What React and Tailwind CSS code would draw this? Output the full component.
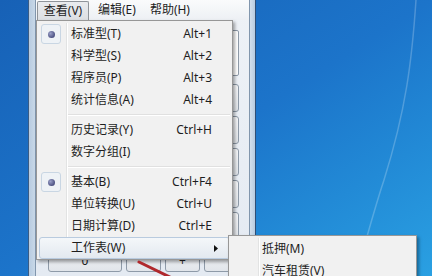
import React from 'react'

const menuItems = [
  { label: '标准型(T)', shortcut: 'Alt+1', checked: true },
  { label: '科学型(S)', shortcut: 'Alt+2' },
  { label: '程序员(P)', shortcut: 'Alt+3' },
  { label: '统计信息(A)', shortcut: 'Alt+4' },
  { separator: true },
  { label: '历史记录(Y)', shortcut: 'Ctrl+H' },
  { label: '数字分组(I)' },
  { separator: true },
  { label: '基本(B)', shortcut: 'Ctrl+F4', checked: true },
  { label: '单位转换(U)', shortcut: 'Ctrl+U' },
  { label: '日期计算(D)', shortcut: 'Ctrl+E' },
  { label: '工作表(W)', submenu: true, hover: true },
]

const subItems = ['抵押(M)', '汽车租赁(V)']

// keys hidden under the menu carry no label
const hiddenRows = 5

const CalcKey = ({ label, wide }) => (
  <div
    className={`${wide ? 'w-[74px]' : 'w-[35px]'} h-[28px] shrink-0 rounded-[3px] border border-[#8e9aa8] bg-linear-to-b from-[#f7f8fa] to-[#e1e5ea] flex items-center justify-center pt-[5px] text-[12px] leading-[14px] text-[#222]`}
  >
    {label}
  </div>
)

const RadioMark = () => (
  <div className="ml-[1px] w-[20px] h-[20px] rounded-[3px] border border-[#c9d6e3] bg-[#eef2f6] flex items-center justify-center">
    <div className="w-[7px] h-[7px] rounded-full bg-radial-[at_35%_35%] from-[#9aa0c8] to-[#2d3166]" />
  </div>
)

const MenuRow = ({ item }) => {
  if (item.separator) {
    return (
      <div className="h-[8px] flex flex-col justify-center pl-[29px]">
        <div className="h-[1px] bg-[#e0e0e0]" />
        <div className="h-[1px] bg-white" />
      </div>
    )
  }
  return (
    <div
      className={`h-[22px] flex items-center rounded-[3px] border ${
        item.hover ? 'border-[#b9cbdf] bg-linear-to-b from-[#f4f7fa] to-[#e3e9f0]' : 'border-transparent'
      }`}
    >
      <div className="w-[26px] h-full flex items-center">{item.checked && <RadioMark />}</div>
      <span className="ml-[5px] flex-1">{item.label}</span>
      {item.shortcut && <span className="mr-[17px]">{item.shortcut}</span>}
      {item.submenu && (
        <svg width="4" height="7" viewBox="0 0 4 7" className="mr-[11px]">
          <path d="M0 0 L4 3.5 L0 7 Z" fill="#111" />
        </svg>
      )}
    </div>
  )
}

const App = () => {
  return (
    <div className="relative w-[432px] h-[276px] overflow-hidden flex bg-linear-to-br from-[#1761b6] via-[#1c74ca] to-[#2aa0e2] text-[12px] text-[#1e1e1e] font-['Noto_Sans','Noto_Sans_CJK_SC',sans-serif]">
      {/* desktop left */}
      <div className="w-[28px] shrink-0" />

      {/* window */}
      <div className="w-[228px] shrink-0 flex">
        <div className="w-[8px] flex">
          <div className="w-[1px] bg-[#3a5c85]" />
          <div className="w-[6px] bg-linear-to-r from-[#b7cbe0] to-[#c8d8e8]" />
          <div className="w-[1px] bg-[#8196ad]" />
        </div>

        <div className="flex-1 flex flex-col bg-linear-to-b from-[#eef2f7] to-[#e4eaf2]">
          {/* menu bar */}
          <div className="h-[20px] flex items-center bg-linear-to-b from-[#fafbfc] to-[#edf0f4]">
            <div className="ml-[1px] h-[19px] w-[52px] mt-[1px] flex items-center justify-center rounded-t-[2px] border border-b-0 border-[#8f949a] bg-linear-to-b from-[#e9ebee] to-[#dcdfe3]">
              查看(V)
            </div>
            <div className="ml-[9px]">编辑(E)</div>
            <div className="ml-[14px]">帮助(H)</div>
          </div>

          {/* calculator body */}
          <div className="flex-1 pl-[12px] pt-[10px] flex flex-col">
            <div className="h-[46px] w-[191px] shrink-0 rounded-[2px] border border-[#8e9aa8] bg-white" />
            <div className="mt-[8px] flex flex-col gap-[4px]">
              {Array.from({ length: hiddenRows }).map((_, r) => (
                <div key={r} className="flex gap-[4px]">
                  <CalcKey />
                  <CalcKey />
                  <CalcKey />
                  <CalcKey />
                  <CalcKey />
                </div>
              ))}
              <div className="flex gap-[4px]">
                <CalcKey label="0" wide />
                <CalcKey label="." />
                <CalcKey label="+" />
                <CalcKey />
              </div>
            </div>
          </div>
        </div>

        <div className="w-[7px] flex">
          <div className="w-[1px] bg-[#8196ad]" />
          <div className="w-[5px] bg-linear-to-r from-[#d2dfec] to-[#b7cbe0]" />
          <div className="w-[1px] bg-[#2f4e75]" />
        </div>
      </div>

      {/* desktop right */}
      <div className="flex-1 relative">
        <svg className="absolute inset-0" width="176" height="276" viewBox="0 0 176 276">
          <path d="M160 0 C156 60 150 110 128 180 C118 210 110 240 100 276" fill="none" stroke="rgba(255,255,255,0.22)" strokeWidth="1.5" />
        </svg>
      </div>

      {/* drop-down menu */}
      <div className="absolute left-[36px] top-[20px] w-[197px] border border-[#979797] bg-[#f1f1f1] px-[2px] pt-[2px] pb-0 shadow-[2px_2px_3px_rgba(0,0,0,0.35)]">
        <div className="absolute top-[2px] bottom-[2px] left-[29px] w-[2px] flex">
          <div className="w-[1px] bg-[#e2e3e3]" />
          <div className="w-[1px] bg-white" />
        </div>
        <div className="relative flex flex-col">
          {menuItems.map((item, i) => (
            <MenuRow key={i} item={item} />
          ))}
        </div>
      </div>

      {/* submenu */}
      <div className="absolute left-[228px] top-[235px] w-[189px] border border-[#979797] bg-[#f1f1f1] p-[2px] shadow-[2px_2px_3px_rgba(0,0,0,0.35)]">
        <div className="absolute top-[2px] bottom-[2px] left-[29px] w-[2px] flex">
          <div className="w-[1px] bg-[#e2e3e3]" />
          <div className="w-[1px] bg-white" />
        </div>
        <div className="relative flex flex-col">
          {subItems.map((s) => (
            <div key={s} className="h-[22px] flex items-center">
              <div className="w-[26px]" />
              <span className="ml-[5px]">{s}</span>
            </div>
          ))}
        </div>
      </div>

      {/* red annotation arrow */}
      <svg className="absolute left-0 top-0" width="432" height="276" viewBox="0 0 432 276">
        <line x1="139" y1="262" x2="180" y2="282" stroke="#b0282c" strokeWidth="3" strokeLinecap="round" />
      </svg>
    </div>
  )
}

export default App
